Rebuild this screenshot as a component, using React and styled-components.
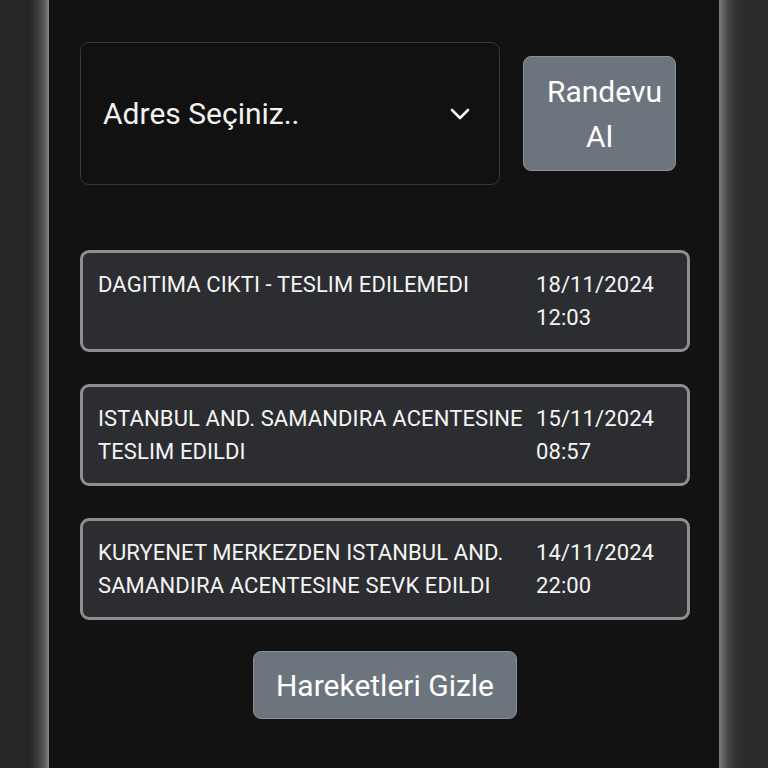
import React from 'react';
import styled, { createGlobalStyle } from 'styled-components';

const GlobalStyle = createGlobalStyle`
    html, body {
        margin: 0;
        padding: 0;
        background: #262626;
    }
    body {
        font-family: Roboto, "Liberation Sans", sans-serif;
        color: #f2f2f2;
    }
    * { box-sizing: border-box; }
`;

const movements = [
    { text: 'DAGITIMA CIKTI - TESLIM EDILEMEDI', date: '18/11/2024', time: '12:03' },
    { text: 'ISTANBUL AND. SAMANDIRA ACENTESINE TESLIM EDILDI', date: '15/11/2024', time: '08:57' },
    { text: 'KURYENET MERKEZDEN ISTANBUL AND. SAMANDIRA ACENTESINE SEVK EDILDI', date: '14/11/2024', time: '22:00' },
];

const Chevron = () => (
    <svg width="20" height="12" viewBox="0 0 20 12" fill="none">
        <path d="M2 2 L10 10 L18 2" stroke="#f2f2f2" strokeWidth="2.6" strokeLinecap="round" strokeLinejoin="round" />
    </svg>
);

const App = () => {
    return (
        <>
            <GlobalStyle />
            <StyledPage>
                <Side $side="left" />
                <Main>
                    <TopRow>
                        <Select>
                            <span>Adres Seçiniz..</span>
                            <Chevron />
                        </Select>
                        <Button $width="153px" $pad="11.5px 23px">Randevu Al</Button>
                    </TopRow>
                    <List>
                        {movements.map((m) => (
                            <Card key={m.date}>
                                <Desc>{m.text}</Desc>
                                <When>
                                    {m.date}
                                    <br />
                                    {m.time}
                                </When>
                            </Card>
                        ))}
                    </List>
                    <Footer>
                        <Button $pad="10.5px 22px">Hareketleri Gizle</Button>
                    </Footer>
                </Main>
                <Side $side="right" />
            </StyledPage>
        </>
    );
};

export default App;

const StyledPage = styled.div`
    display: flex;
    width: 768px;
    height: 768px;
    overflow: hidden;
`;

const Side = styled.div`
    width: 50px;
    flex-shrink: 0;
    background: ${(p) =>
        p.$side === 'left'
            ? 'linear-gradient(to right, #262626 0px, #272727 30px, #3c3c3c 38px, #5e5e5e 45px, #7a7a7a 48px, #8a8a8a 49px, #0e0e0e 49px)'
            : 'linear-gradient(to right, #0e0e0e 0px, #0e0e0e 1px, #7c7c7c 1px, #6a6a6a 4px, #484848 10px, #323232 18px, #2c2c2c 26px, #2a2a2a 50px)'};
`;

const Main = styled.div`
    flex: 1;
    background: #121212;
    padding: 42px 28px 0 30px;
`;

const TopRow = styled.div`
    display: flex;
    align-items: center;
    gap: 23px;
`;

const Select = styled.div`
    width: 420px;
    height: 143px;
    display: flex;
    align-items: center;
    justify-content: space-between;
    padding: 0 29px 0 22px;
    border: 1px solid #383838;
    border-radius: 9px;
    background: #111111;
    font-size: 30px;
    color: #f2f2f2;
`;

const Button = styled.button`
    width: ${(p) => p.$width || 'auto'};
    padding: ${(p) => p.$pad || '10px 23px'};
    font-family: Roboto, "Liberation Sans", sans-serif;
    font-size: 30px;
    line-height: 45px;
    color: #ffffff;
    background: #6c757d;
    border: 1px solid #8a9096;
    border-radius: 8px;
    text-align: center;
    cursor: pointer;
`;

const List = styled.div`
    display: flex;
    flex-direction: column;
    gap: 32px;
    margin-top: 65px;
`;

const Card = styled.div`
    display: grid;
    grid-template-columns: 438px 1fr;
    height: 102px;
    padding: 15px 15px 14px;
    border: 3px solid #8e8e8e;
    border-radius: 9px;
    background: #2c2d30;
    font-size: 22px;
    line-height: 33px;
    color: #f4f4f4;
    letter-spacing: 0.1px;
`;

const Desc = styled.div``;

const When = styled.div``;

const Footer = styled.div`
    display: flex;
    justify-content: center;
    margin-top: 31px;
`;
